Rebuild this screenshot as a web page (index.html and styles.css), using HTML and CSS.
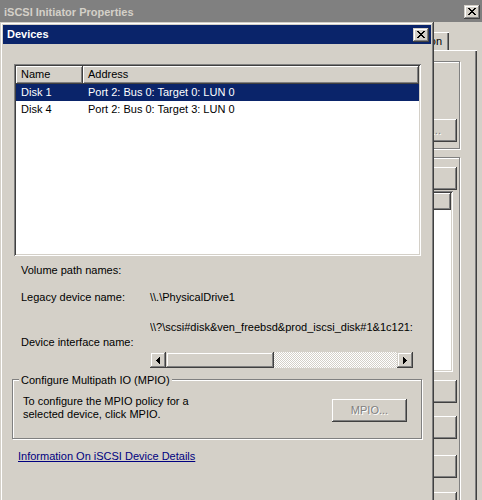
FILE: index.html
```html
<!DOCTYPE html>
<html>
<head>
<meta charset="utf-8">
<title>Devices</title>
<link rel="stylesheet" href="styles.css">
</head>
<body>
<div class="desktop">
  <div class="bgwin">
    <div class="bg-title">
      <span class="bg-title-text">iSCSI Initiator Properties</span>
      <span class="capbtn bg-close"><svg width="8" height="7" viewBox="0 0 8 7" shape-rendering="crispEdges"><path d="M0 0h2v1H0zM6 0h2v1H6zM1 1h2v1H1zM5 1h2v1H5zM2 2h4v1H2zM3 3h2v1H3zM2 4h4v1H2zM1 5h2v1H1zM5 5h2v1H5zM0 6h2v1H0zM6 6h2v1H6z" fill="#000"/></svg></span>
    </div>
    <div class="bg-client">
      <div class="tabs">
        <div class="tab">Configuration</div>
      </div>
      <div class="panel">
        <div class="etched grp1">
          <div class="btn btn-quick disabled">Quick Connect...</div>
        </div>
        <div class="etched grp2">
          <div class="btn btn-bg btn-refresh">Refresh</div>
          <div class="bg-list">
            <div class="bg-list-head"><div class="hcell hcell-bgname">Name</div><div class="hcell hcell-fill">Status</div></div>
          </div>
          <div class="btn btn-bg btn-connect">Connect</div>
          <div class="btn btn-bg btn-disconnect">Disconnect</div>
          <div class="btn btn-bg btn-props">Properties...</div>
          <div class="btn btn-bg btn-devs"></div>
        </div>
      </div>
    </div>
  </div>

  <div class="dlg">
    <div class="cap">
      <span class="cap-title">Devices</span>
      <span class="capbtn dlg-close"><svg width="8" height="7" viewBox="0 0 8 7" shape-rendering="crispEdges"><path d="M0 0h2v1H0zM6 0h2v1H6zM1 1h2v1H1zM5 1h2v1H5zM2 2h4v1H2zM3 3h2v1H3zM2 4h4v1H2zM1 5h2v1H1zM5 5h2v1H5zM0 6h2v1H0zM6 6h2v1H6z" fill="#000"/></svg></span>
    </div>
    <div class="client">
      <div class="lv">
        <div class="lvh">
          <div class="hcell hcell-name">Name</div>
          <div class="hcell hcell-fill">Address</div>
        </div>
        <div class="lvrow selected"><span class="c-name">Disk 1</span><span class="c-addr">Port 2: Bus 0: Target 0: LUN 0</span></div>
        <div class="lvrow"><span class="c-name">Disk 4</span><span class="c-addr">Port 2: Bus 0: Target 3: LUN 0</span></div>
      </div>

      <div class="details">
        <div class="line vol">Volume path names:</div>
        <div class="pair legacy">
          <div class="lbl">Legacy device name:</div>
          <div class="val">\\.\PhysicalDrive1</div>
        </div>
        <div class="pair iface">
          <div class="lbl lbl-iface">Device interface name:</div>
          <div class="iface-right">
            <div class="val val-clip">\\?\scsi#disk&amp;ven_freebsd&amp;prod_iscsi_disk#1&amp;1c121:</div>
            <div class="sb">
              <div class="sb-btn"><svg width="4" height="7" viewBox="0 0 4 7" shape-rendering="crispEdges"><path d="M0 3h1v1H0zM1 2h1v3H1zM2 1h1v5H2zM3 0h1v7H3z" fill="#000"/></svg></div>
              <div class="sb-thumb"></div>
              <div class="sb-track"></div>
              <div class="sb-btn"><svg width="4" height="7" viewBox="0 0 4 7" shape-rendering="crispEdges"><path d="M3 3h1v1H3zM2 2h1v3H2zM1 1h1v5H1zM0 0h1v7H0z" fill="#000"/></svg></div>
            </div>
          </div>
        </div>
      </div>

      <div class="etched grp">
        <span class="legend">Configure Multipath IO (MPIO)</span>
        <div class="grp-body">
          <div class="grp-text">To configure the MPIO policy for a<br>selected device, click MPIO.</div>
          <div class="btn btn-mpio disabled">MPIO...</div>
        </div>
      </div>

      <a class="link" href="#">Information On iSCSI Device Details</a>
    </div>
  </div>
</div>
</body>
</html>
```

FILE: styles.css
```css
* { box-sizing: border-box; }
body {
  margin: 0;
  font-family: "Liberation Sans", Arial, sans-serif;
  font-size: 11px;
  line-height: 13px;
  color: #000;
  background: #d4d0c8;
}
.desktop {
  position: relative;
  width: 482px;
  height: 500px;
  overflow: hidden;
  background: #d4d0c8;
}

/* ---------- background window ---------- */
.bgwin {
  width: 482px;
  height: 500px;
  display: flex;
  flex-direction: column;
}
.bg-title {
  height: 22px;
  flex: none;
  background: #808080;
  color: #d4d0c8;
  font-weight: bold;
  display: flex;
  align-items: center;
  justify-content: space-between;
  padding: 2px 2px 0 4px;
}
.bg-title-text { line-height: 13px; }
.capbtn {
  width: 16px;
  height: 14px;
  flex: none;
  background: #d4d0c8;
  box-shadow: inset -1px -1px #404040, inset 1px 1px #d4d0c8, inset -2px -2px #808080, inset 2px 2px #fff;
  display: flex;
  align-items: center;
  justify-content: center;
  padding-bottom: 1px;
}
.capbtn svg { display: block; }

.bg-client {
  flex: 1;
  display: flex;
  flex-direction: column;
  padding-right: 5px;
  min-height: 0;
}
.tabs {
  display: flex;
  justify-content: flex-end;
  margin-top: 10px;
  height: 18px;
  padding-right: 28px;
  flex: none;
}
.tab {
  white-space: nowrap;
  line-height: 18px;
  padding: 0 7px 0 6px;
  box-shadow: inset 1px 1px #fff, inset -1px 0 #404040, inset -2px 0 #808080;
}
.panel {
  flex: 1;
  margin-left: 10px;
  border-top: 1px solid #fff;
  border-left: 1px solid #fff;
  box-shadow: inset -1px 0 #404040, inset -2px 0 #808080;
  padding-right: 2px;
  display: flex;
  flex-direction: column;
}
.etched {
  border: 1px solid #808080;
  box-shadow: 1px 1px 0 #fff, inset 1px 1px 0 #fff;
}
.grp1 {
  margin: 10px 15px 0 8px;
  height: 88px;
  display: flex;
  flex-direction: column;
  align-items: flex-end;
  flex: none;
}
.grp2 {
  margin: 8px 15px 0 8px;
  flex: 1;
  display: flex;
  flex-direction: column;
  align-items: flex-end;
}
.btn {
  height: 23px;
  flex: none;
  background: #d4d0c8;
  box-shadow: inset -1px -1px #404040, inset 1px 1px #fff, inset -2px -2px #808080;
  display: flex;
  align-items: center;
  justify-content: center;
  white-space: nowrap;
}
.disabled {
  color: #808080;
  text-shadow: 1px 1px 0 #fff;
}
.btn-quick {
  width: 100px;
  margin: 57px 2px 0 0;
  justify-content: flex-end;
  padding-right: 16px;
}
.btn-bg { width: 140px; margin-right: 2px; }
.btn-refresh { margin-top: 9px; }
.bg-list {
  width: 300px;
  height: 181px;
  margin: 1px 6px 0 0;
  padding: 2px;
  background: #fff;
  box-shadow: inset 1px 1px #808080, inset -1px -1px #fff, inset 2px 2px #404040, inset -2px -2px #d4d0c8;
  flex: none;
}
.bg-list-head { display: flex; height: 17px; }
.hcell-bgname { width: 150px; }
.btn-connect { margin-top: 8px; }
.btn-disconnect { margin-top: 13px; }
.btn-props { margin-top: 16px; }
.btn-devs { margin-top: 14px; }

/* ---------- Devices dialog ---------- */
.dlg {
  position: absolute;
  left: 0;
  top: 22px;
  width: 434px;
  height: 490px;
  background: #d4d0c8;
  box-shadow: inset -1px -1px #404040, inset 1px 1px #d4d0c8, inset -2px -2px #808080, inset 2px 2px #fff;
  padding: 3px;
  display: flex;
  flex-direction: column;
}
.cap {
  height: 19px;
  flex: none;
  background: #0a246a;
  color: #fff;
  font-weight: bold;
  display: flex;
  align-items: flex-start;
  justify-content: space-between;
  padding: 0 2px 0 4px;
}
.cap-title { line-height: 19px; }
.dlg-close { margin-top: 3px; }

.client {
  flex: 1;
  display: flex;
  flex-direction: column;
}
.lv {
  margin: 20px 10px 0 11px;
  height: 192px;
  flex: none;
  padding: 2px;
  background: #fff;
  box-shadow: inset 1px 1px #808080, inset -1px -1px #fff, inset 2px 2px #404040, inset -2px -2px #d4d0c8;
}
.lvh { display: flex; height: 18px; }
.hcell {
  background: #d4d0c8;
  box-shadow: inset -1px -1px #404040, inset 1px 1px #fff, inset -2px -2px #808080;
  padding-left: 5px;
  line-height: 17px;
  white-space: nowrap;
  overflow: hidden;
}
.hcell-name { width: 67px; flex: none; }
.hcell-fill { flex: 1; }
.lvrow {
  display: flex;
  height: 17px;
  line-height: 17px;
  white-space: nowrap;
}
.lvrow.selected { background: #0a246a; color: #fff; }
.c-name { width: 67px; padding-left: 5px; flex: none; }
.c-addr { padding-left: 5px; }

.details { padding-left: 18px; flex: none; }
.line.vol { margin-top: 8px; }
.pair { display: flex; }
.lbl { width: 129px; flex: none; white-space: nowrap; }
.legacy { margin-top: 14px; }
.iface { margin-top: 17px; }
.lbl-iface { padding-top: 15px; }
.iface-right { width: 263px; }
.val { white-space: nowrap; }
.val-clip { overflow: hidden; }
.sb {
  display: flex;
  height: 16px;
  margin-top: 18px;
}
.sb-btn {
  width: 16px;
  flex: none;
  background: #d4d0c8;
  box-shadow: inset -1px -1px #404040, inset 1px 1px #d4d0c8, inset -2px -2px #808080, inset 2px 2px #fff;
  display: flex;
  align-items: center;
  justify-content: center;
}
.sb-btn svg { display: block; }
.sb-thumb {
  width: 108px;
  flex: none;
  background: #d4d0c8;
  box-shadow: inset -1px -1px #404040, inset 1px 1px #d4d0c8, inset -2px -2px #808080, inset 2px 2px #fff;
}
.sb-track {
  flex: 1;
  background-image: conic-gradient(#fff 0 25%, #d4d0c8 0 50%, #fff 0 75%, #d4d0c8 0);
  background-size: 2px 2px;
}

.grp {
  position: relative;
  margin: 11px 9px 0 9px;
  height: 60px;
  flex: none;
}
.legend {
  position: absolute;
  left: 6px;
  top: -6px;
  padding: 0 2px;
  background: #d4d0c8;
  white-space: nowrap;
}
.grp-body {
  display: flex;
  justify-content: space-between;
  align-items: flex-start;
  padding: 15px 14px 0 10px;
}
.btn-mpio {
  width: 75px;
  margin-top: 4px;
}
.link {
  margin: 11px 0 0 15px;
  align-self: flex-start;
  color: #000080;
  text-decoration: underline;
}
```
